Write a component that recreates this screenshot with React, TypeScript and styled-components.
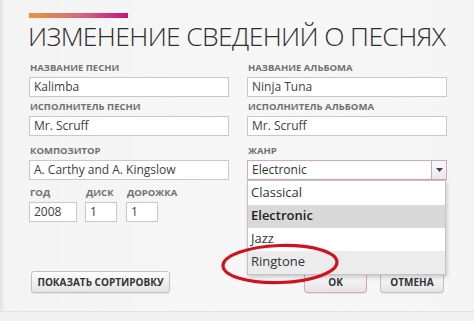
import React from "react";
import styled, { createGlobalStyle } from "styled-components";

const GlobalStyle = createGlobalStyle`
    html, body {
        margin: 0;
        padding: 0;
        width: 474px;
        height: 321px;
        overflow: hidden;
        background: #f3f3f3;
        font-family: "Open Sans", "Liberation Sans", sans-serif;
    }
`

const genres = ["Classical", "Electronic", "Jazz", "Ringtone"];

export default function App() {
    return (
        <>
            <GlobalStyle />
            <Page>
                <Panel>
                    <AccentBar />
                    <Title>ИЗМЕНЕНИЕ СВЕДЕНИЙ О ПЕСНЯХ</Title>

                    <Row $mt={12}>
                        <Field>
                            <Label>Название песни</Label>
                            <Input>Kalimba</Input>
                        </Field>
                        <Field>
                            <Label>Название альбома</Label>
                            <Input>Ninja Tuna</Input>
                        </Field>
                    </Row>

                    <Row $mt={4}>
                        <Field>
                            <Label>Исполнитель песни</Label>
                            <Input>Mr. Scruff</Input>
                        </Field>
                        <Field>
                            <Label>Исполнитель альбома</Label>
                            <Input>Mr. Scruff</Input>
                        </Field>
                    </Row>

                    <Row $mt={9}>
                        <Field>
                            <Label>Композитор</Label>
                            <Input>A. Carthy and A. Kingslow</Input>
                        </Field>
                        <Field>
                            <Label>Жанр</Label>
                            <Select>
                                <SelectValue>Electronic</SelectValue>
                                <SelectArrow>
                                    <svg width="7" height="4" viewBox="0 0 7 4">
                                        <path d="M0 0h7L3.5 4z" fill="#444" />
                                    </svg>
                                </SelectArrow>
                                <Dropdown>
                                    {genres.map((g, i) => (
                                        <Option key={g} $active={i === 1} $shade={i === 3}>
                                            {g}
                                        </Option>
                                    ))}
                                </Dropdown>
                            </Select>
                        </Field>
                    </Row>

                    <Row $mt={7}>
                        <Numbers>
                            <Field>
                                <Label>Год</Label>
                                <Input $w={48}>2008</Input>
                            </Field>
                            <Field>
                                <Label>Диск</Label>
                                <Input $w={32}>1</Input>
                            </Field>
                            <Field>
                                <Label>Дорожка</Label>
                                <Input $w={32}>1</Input>
                            </Field>
                        </Numbers>
                    </Row>

                    <Footer>
                        <Button $w={139}>Показать сортировку</Button>
                        <ButtonGroup>
                            <Button $w={63} $primary>OK</Button>
                            <Button $w={64}>Отмена</Button>
                        </ButtonGroup>
                    </Footer>

                    <Circle width="126" height="46" viewBox="0 0 126 46">
                        <ellipse cx="62" cy="24" rx="57" ry="18.5" fill="none" stroke="#d3101c" strokeWidth="3.2" transform="rotate(-2 62 24)" />
                    </Circle>
                </Panel>
            </Page>
        </>
    );
}

const Page = styled.div`
    width: 474px;
    height: 321px;
    background: #f1f1f1;
`

const Panel = styled.div`
    position: relative;
    box-sizing: border-box;
    height: 312px;
    padding: 13px 0 0 29px;
    background: linear-gradient(90deg, #e2e2e2 0px, #f4f4f4 5px, #f7f7f7 60%, #f5f5f5 100%);
    border-bottom: 1px solid #e2e2e2;
`

const AccentBar = styled.div`
    width: 99px;
    height: 5px;
    background: linear-gradient(90deg, #e9953b, #d66a7e 50%, #c7137c);
`

const Title = styled.h1`
    margin: 4px 0 0 -1px;
    font-weight: 300;
    font-size: 26.5px;
    line-height: 28px;
    letter-spacing: -0.65px;
    color: #2e2e2e;
    white-space: nowrap;
`

const Row = styled.div<{ $mt: number }>`
    display: grid;
    grid-template-columns: 200px 200px;
    column-gap: 18px;
    margin-top: ${(p) => p.$mt}px;
    height: 35px;
`

const Field = styled.div`
    display: flex;
    flex-direction: column;
`

const Label = styled.div`
    height: 12px;
    margin: 0 0 3px 1px;
    font-size: 9.5px;
    line-height: 12px;
    font-weight: 700;
    text-transform: uppercase;
    color: #707070;
    white-space: nowrap;
`

const Input = styled.div<{ $w?: number }>`
    box-sizing: border-box;
    width: ${(p) => (p.$w ? `${p.$w}px` : "100%")};
    height: 20px;
    padding: 0 4px;
    background: #fff;
    border: 1px solid #c8c8c8;
    font-size: 12px;
    line-height: 18px;
    color: #404040;
    white-space: nowrap;
`

const Numbers = styled.div`
    display: flex;
    gap: 8px;

    > div:nth-child(3) {
        margin-left: 1px;
    }
`

const Select = styled.div`
    position: relative;
    box-sizing: border-box;
    display: flex;
    height: 20px;
    background: #fff;
    border: 1px solid #d9a3c3;
`

const SelectValue = styled.div`
    flex: 1;
    padding-left: 4px;
    font-size: 12px;
    line-height: 18px;
    color: #333;
`

const SelectArrow = styled.div`
    width: 14px;
    display: flex;
    align-items: center;
    justify-content: center;
    border-left: 1px solid #d9a3c3;
    background: linear-gradient(#fafafa, #e9e9e9);
`

const Dropdown = styled.div`
    position: absolute;
    top: 19px;
    left: -1px;
    right: 0;
    z-index: 2;
    box-sizing: border-box;
    padding-top: 1px;
    background: #fff;
    border: 1px solid #c4c4c4;
    box-shadow: 1px 2px 4px rgba(0, 0, 0, 0.2);
`

const Option = styled.div<{ $active?: boolean; $shade?: boolean }>`
    height: 23px;
    padding-left: 3px;
    font-size: 13px;
    line-height: 21px;
    font-weight: ${(p) => (p.$active ? 600 : 400)};
    color: ${(p) => (p.$active ? "#1e1e1e" : "#333")};
    background: ${(p) => (p.$active ? "#d9d9d9" : p.$shade ? "#ececec" : "#fff")};
`

const Footer = styled.div`
    display: flex;
    justify-content: space-between;
    width: 413px;
    margin: 49px 0 0 2px;
`

const ButtonGroup = styled.div`
    display: flex;
    gap: 13px;
`

const Button = styled.div<{ $w: number; $primary?: boolean }>`
    box-sizing: border-box;
    width: ${(p) => p.$w}px;
    height: 22px;
    border: 1px solid ${(p) => (p.$primary ? "#d8a4c2" : "#c2c2c2")};
    border-radius: 3px;
    background: linear-gradient(#fdfdfd, #e4e4e4);
    box-shadow: 0 1px 1px rgba(0, 0, 0, 0.08);
    font-size: 10px;
    font-weight: 700;
    line-height: 20px;
    text-align: center;
    text-transform: uppercase;
    color: #333;
    white-space: nowrap;
`

const Circle = styled.svg`
    position: absolute;
    left: 218px;
    top: 240px;
    z-index: 3;
`
